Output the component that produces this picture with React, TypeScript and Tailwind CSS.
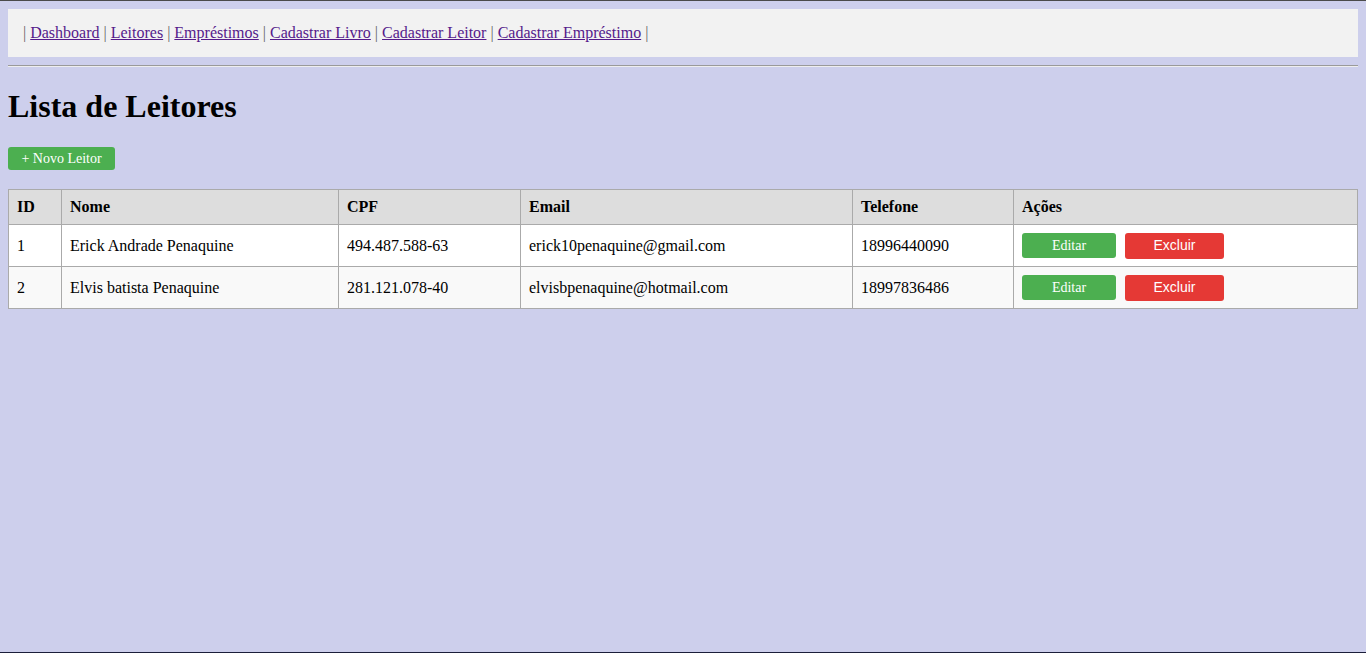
import React from "react";

const links = [
  "Dashboard",
  "Leitores",
  "Empréstimos",
  "Cadastrar Livro",
  "Cadastrar Leitor",
  "Cadastrar Empréstimo",
];

const rows = [
  { id: "1", nome: "Erick Andrade Penaquine", cpf: "494.487.588-63", email: "erick10penaquine@gmail.com", tel: "18996440090" },
  { id: "2", nome: "Elvis batista Penaquine", cpf: "281.121.078-40", email: "elvisbpenaquine@hotmail.com", tel: "18997836486" },
];

export default function App() {
  return (
    <div
      className="min-h-[653px] bg-[#cdcfec] text-black border-t border-t-[#4a4a4a] border-b border-b-[#1b1e3a] px-2 pt-2 flex flex-col"
      style={{ fontFamily: '"Liberation Serif", "Times New Roman", serif' }}
    >
      <nav className="bg-[#f2f2f2] h-[48px] px-[15px] flex items-center text-[16px] leading-[18px]">
        <span className="text-[#666]">|</span>
        {links.map((l) => (
          <React.Fragment key={l}>
            <span>&nbsp;</span>
            <a href="#" className="text-[#551a8b] underline">{l}</a>
            <span>&nbsp;</span>
            <span className="text-[#666]">|</span>
          </React.Fragment>
        ))}
      </nav>
      <div className="mt-[8px] h-[2px] border-t border-t-[#9a9a9a] border-b border-b-[#eeeeee]" />
      <h1 className="text-[32px] font-bold leading-[37px] mt-[21px] mb-[21px]">Lista de Leitores</h1>
      <div>
        <a
          href="#"
          className="inline-flex items-center justify-center w-[107px] h-[23px] pt-[1px] bg-[#4caf50] text-white text-[14px] rounded-[3px] no-underline"
        >
          + Novo Leitor
        </a>
      </div>
      <table className="mt-[19px] w-full table-fixed border-collapse border border-[#aaaaaa] text-[16px]">
        <colgroup>
          <col className="w-[53px]" />
          <col className="w-[277px]" />
          <col className="w-[182px]" />
          <col className="w-[332px]" />
          <col className="w-[161px]" />
          <col />
        </colgroup>
        <thead>
          <tr className="bg-[#dddddd] h-[35px]">
            {["ID", "Nome", "CPF", "Email", "Telefone", "Ações"].map((h) => (
              <th key={h} className="border border-[#aaaaaa] px-[8px] py-0 text-left font-bold">
                {h}
              </th>
            ))}
          </tr>
        </thead>
        <tbody>
          {rows.map((r, i) => (
            <tr key={r.id} className={`h-[42px] ${i % 2 === 1 ? "bg-[#f9f9f9]" : "bg-white"}`}>
              <td className="border border-[#aaaaaa] px-[8px]">{r.id}</td>
              <td className="border border-[#aaaaaa] px-[8px]">{r.nome}</td>
              <td className="border border-[#aaaaaa] px-[8px]">{r.cpf}</td>
              <td className="border border-[#aaaaaa] px-[8px]">{r.email}</td>
              <td className="border border-[#aaaaaa] px-[8px]">{r.tel}</td>
              <td className="border border-[#aaaaaa] px-[8px]">
                <div className="flex items-center gap-[9px]">
                  <a
                    href="#"
                    className="inline-flex items-center justify-center w-[94px] h-[25px] bg-[#4caf50] text-white text-[14px] rounded-[3px] no-underline"
                  >
                    Editar
                  </a>
                  <button
                    className="inline-flex items-center justify-center w-[99px] h-[26px] bg-[#e53935] text-white text-[14px] rounded-[3px]"
                    style={{ fontFamily: '"Liberation Sans", Arial, sans-serif' }}
                  >
                    Excluir
                  </button>
                </div>
              </td>
            </tr>
          ))}
        </tbody>
      </table>
    </div>
  );
}
